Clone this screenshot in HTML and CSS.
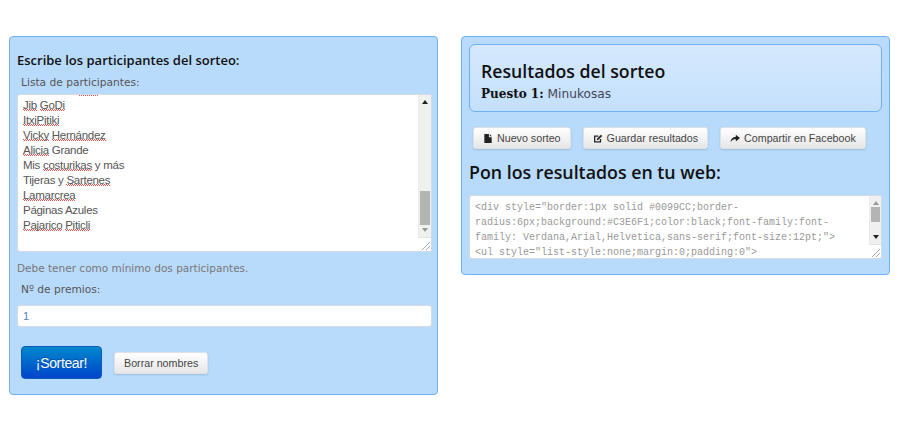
FILE: index.html
```html
<!DOCTYPE html>
<html lang="es">
<head>
<meta charset="utf-8">
<title>Sorteo</title>
<link rel="stylesheet" href="styles.css">
</head>
<body>
<main class="page">
  <section class="panel panel-left">
    <h2 class="form-title">Escribe los participantes del sorteo:</h2>
    <label class="field-label">Lista de participantes:</label>
    <div class="textarea names">
      <div class="names-text">
        <div class="clipped"><span class="sp">&nbsp;&nbsp;&nbsp;&nbsp;&nbsp;&nbsp;&nbsp;</span></div>
        <div><span class="sp">Jib</span> <span class="sp">GoDi</span></div>
        <div><span class="sp">ItxiPitiki</span></div>
        <div><span class="sp">Vicky</span> <span class="sp">Hernández</span></div>
        <div><span class="sp">Alicia</span> Grande</div>
        <div>Mis <span class="sp">costurikas</span> y más</div>
        <div>Tijeras y <span class="sp">Sartenes</span></div>
        <div><span class="sp">Lamarcrea</span></div>
        <div>Páginas Azules</div>
        <div><span class="sp">Pajarico</span> <span class="sp">Piticli</span></div>
      </div>
      <div class="scrollbar scroll-names">
        <div class="arrow arrow-up dark"></div>
        <div class="track"><div class="thumb thumb-names"></div></div>
        <div class="arrow arrow-down"></div>
        <div class="resizer"><svg width="12" height="12" viewBox="0 0 12 12"><path d="M3 11 11 3M7 11l4-4" stroke="#aaa" fill="none"/></svg></div>
      </div>
    </div>
    <p class="help">Debe tener como mínimo dos participantes.</p>
    <label class="field-label prize-label">Nº de premios:</label>
    <div class="text-input">1</div>
    <div class="actions">
      <button class="btn-primary">¡Sortear!</button>
      <button class="btn">Borrar nombres</button>
    </div>
  </section>

  <section class="panel panel-right">
    <div class="result-box">
      <h1 class="result-title">Resultados del sorteo</h1>
      <p class="result-line"><strong>Puesto 1:</strong> Minukosas</p>
    </div>
    <div class="toolbar">
      <button class="btn"><svg class="ico" viewBox="0 0 10 12"><path d="M1 1h5v3.500h3V11H1zM7 1l2 2.500H7z" fill="#222"/></svg>Nuevo sorteo</button>
      <button class="btn"><svg class="ico" viewBox="0 0 12 12"><path d="M9 6.500V10H2V3h4.500" fill="none" stroke="#222" stroke-width="1.500"/><path d="M4.500 8.200 5 6l4.500-4.500 1.500 1.500L6.500 7.500z" fill="#222"/></svg>Guardar resultados</button>
      <button class="btn"><svg class="ico" viewBox="0 0 12 12"><path d="M7 1.500 12 5.500 7 9.500V7C4.500 7 2.500 7.500 .5 10.500 1 6.500 3.500 4 7 4z" fill="#222"/></svg>Compartir en Facebook</button>
    </div>
    <h2 class="web-title">Pon los resultados en tu web:</h2>
    <div class="textarea code">
      <div class="code-text">&lt;div style="border:1px solid #0099CC;border-<br>radius:6px;background:#C3E6F1;color:black;font-family:font-<br>family: Verdana,Arial,Helvetica,sans-serif;font-size:12pt;"&gt;<br>&lt;ul style="list-style:none;margin:0;padding:0"&gt;</div>
      <div class="scrollbar scroll-code">
        <div class="arrow arrow-up"></div>
        <div class="track"><div class="thumb thumb-code"></div></div>
        <div class="arrow arrow-down dark"></div>
        <div class="resizer"><svg width="12" height="12" viewBox="0 0 12 12"><path d="M3 11 11 3M7 11l4-4" stroke="#aaa" fill="none"/></svg></div>
      </div>
    </div>
  </section>
</main>
</body>
</html>
```
FILE: styles.css
```css
* { box-sizing: border-box; }
body { margin: 0; background: #fff; }
.page {
  display: flex;
  align-items: flex-start;
  gap: 23px;
  padding: 36px 10px 0 9px;
  font-family: "DejaVu Sans", sans-serif;
}
.panel {
  width: 429px;
  background: #b9dbfb;
  border: 1px solid #6fb0f5;
  border-radius: 4px;
}
.panel-left { height: 359px; padding: 0 5px 0 7px; }
.panel-right { height: 239px; padding: 7px; }
h1, h2, p { margin: 0; }
.form-title {
  margin-top: 14px;
  font: 600 13px/18px "Open Sans", sans-serif;
  color: #111;
}
.field-label {
  display: block;
  padding-left: 4px;
  font-size: 10.65px;
  line-height: 16px;
  color: #555;
}
.form-title + .field-label { margin-top: 6px; }
.textarea {
  display: flex;
  overflow: hidden;
  background: #fff;
  border: 1px solid #d5dbe2;
  border-radius: 3px;
}
.names { height: 158px; margin-top: 3px; }
.names-text {
  flex: 1;
  height: 156px;
  margin-top: -12px;
  padding-left: 5px;
  font: 11.5px/15px "Liberation Sans", sans-serif;
  letter-spacing: -.28px;
  color: #555;
}
.clipped { padding-left: 55px; }
.sp {
  background-image:
    repeating-linear-gradient(90deg, #e55 0 1px, transparent 1px 2px),
    repeating-linear-gradient(90deg, transparent 0 1px, #e55 1px 2px);
  background-repeat: no-repeat;
  background-size: 100% 1px;
  background-position: 0 calc(100% - 1px), 0 100%;
}
.scrollbar {
  display: flex;
  flex-direction: column;
  flex: none;
  width: 13px;
  background: #f0f0f0;
  border-left: 1px solid #ececec;
}
.arrow { flex: none; height: 14px; display: flex; align-items: center; justify-content: center; position: relative; }
.arrow::before { content: ""; border-left: 3px solid transparent; border-right: 3px solid transparent; }
.arrow-up::before { border-bottom: 4px solid #999; }
.arrow-down::before { border-top: 4px solid #999; }
.arrow-up.dark::before { border-bottom-color: #222; }
.arrow-down.dark::before { border-top-color: #222; }
.track { flex: 1; min-height: 0; padding: 0 1px; display: flex; flex-direction: column; justify-content: flex-end; }
.thumb { flex: none; background: #b4b4b4; }
.thumb-names { height: 34px; margin-bottom: -2px; }
.thumb-code { height: 15px; margin-bottom: 8px; }
.resizer { flex: none; height: 14px; margin-left: -1px; background: #fff; border-top: 1px solid #e4e4e4; display: flex; justify-content: flex-end; align-items: flex-end; }
.help { margin-top: 8px; font-size: 10.5px; line-height: 16px; color: #777; }
.prize-label { margin-top: 6px; }
.text-input {
  height: 22px;
  margin-top: 7px;
  padding-left: 5px;
  background: #fff;
  border: 1px solid #d5dbe2;
  border-radius: 3px;
  font: 11px/20px "Liberation Sans", sans-serif;
  color: #5580c0;
}
.actions { display: flex; align-items: center; gap: 12px; margin-top: 19px; padding-left: 4px; }
button { font-family: "Liberation Sans", sans-serif; cursor: pointer; }
.btn-primary {
  flex: none;
  width: 81px;
  height: 33px;
  padding: 0;
  background: linear-gradient(#0088cc, #0044cc);
  border: 1px solid #0a5ab8;
  border-radius: 4px;
  color: #fff;
  font-size: 14px;
  letter-spacing: -.35px;
  text-shadow: 0 -1px 0 rgba(0,0,0,.25);
}
.btn {
  flex: none;
  display: inline-flex;
  align-items: center;
  justify-content: center;
  height: 22px;
  padding: 0 9px;
  background: linear-gradient(#fff, #e6e6e6);
  border: 1px solid #dde2e8;
  border-radius: 3px;
  box-shadow: 0 1px 2px rgba(0,0,0,.15);
  color: #444;
  font-size: 10.7px;
  white-space: nowrap;
}
.ico { width: 10px; height: 11px; margin-right: 4px; }
.result-box {
  height: 68px;
  padding: 14px 11px 0;
  background: linear-gradient(#d6e9fd, #c3e0fc);
  border: 1px solid #6fb0f5;
  border-radius: 6px;
}
.result-title {
  font: 600 17.7px/24px "Open Sans", sans-serif;
  color: #111;
}
.result-line { margin-top: 3px; font-size: 12.2px; line-height: 16px; color: #445; }
.result-line strong { font-family: "DejaVu Serif", serif; font-size: 12px; color: #111; }
.toolbar { display: flex; gap: 12px; margin-top: 15px; padding-left: 4px; }
.web-title {
  margin-top: 11px;
  font: 600 17.8px/24px "Open Sans", sans-serif;
  color: #111;
}
.code { height: 64px; margin-top: 11px; }
.code-text {
  flex: 1;
  padding: 4px 0 0 5px;
  font: 10px/15px "Liberation Mono", monospace;
  color: #999;
  white-space: nowrap;
  overflow: hidden;
}
.scroll-code { width: 12px; }
```
